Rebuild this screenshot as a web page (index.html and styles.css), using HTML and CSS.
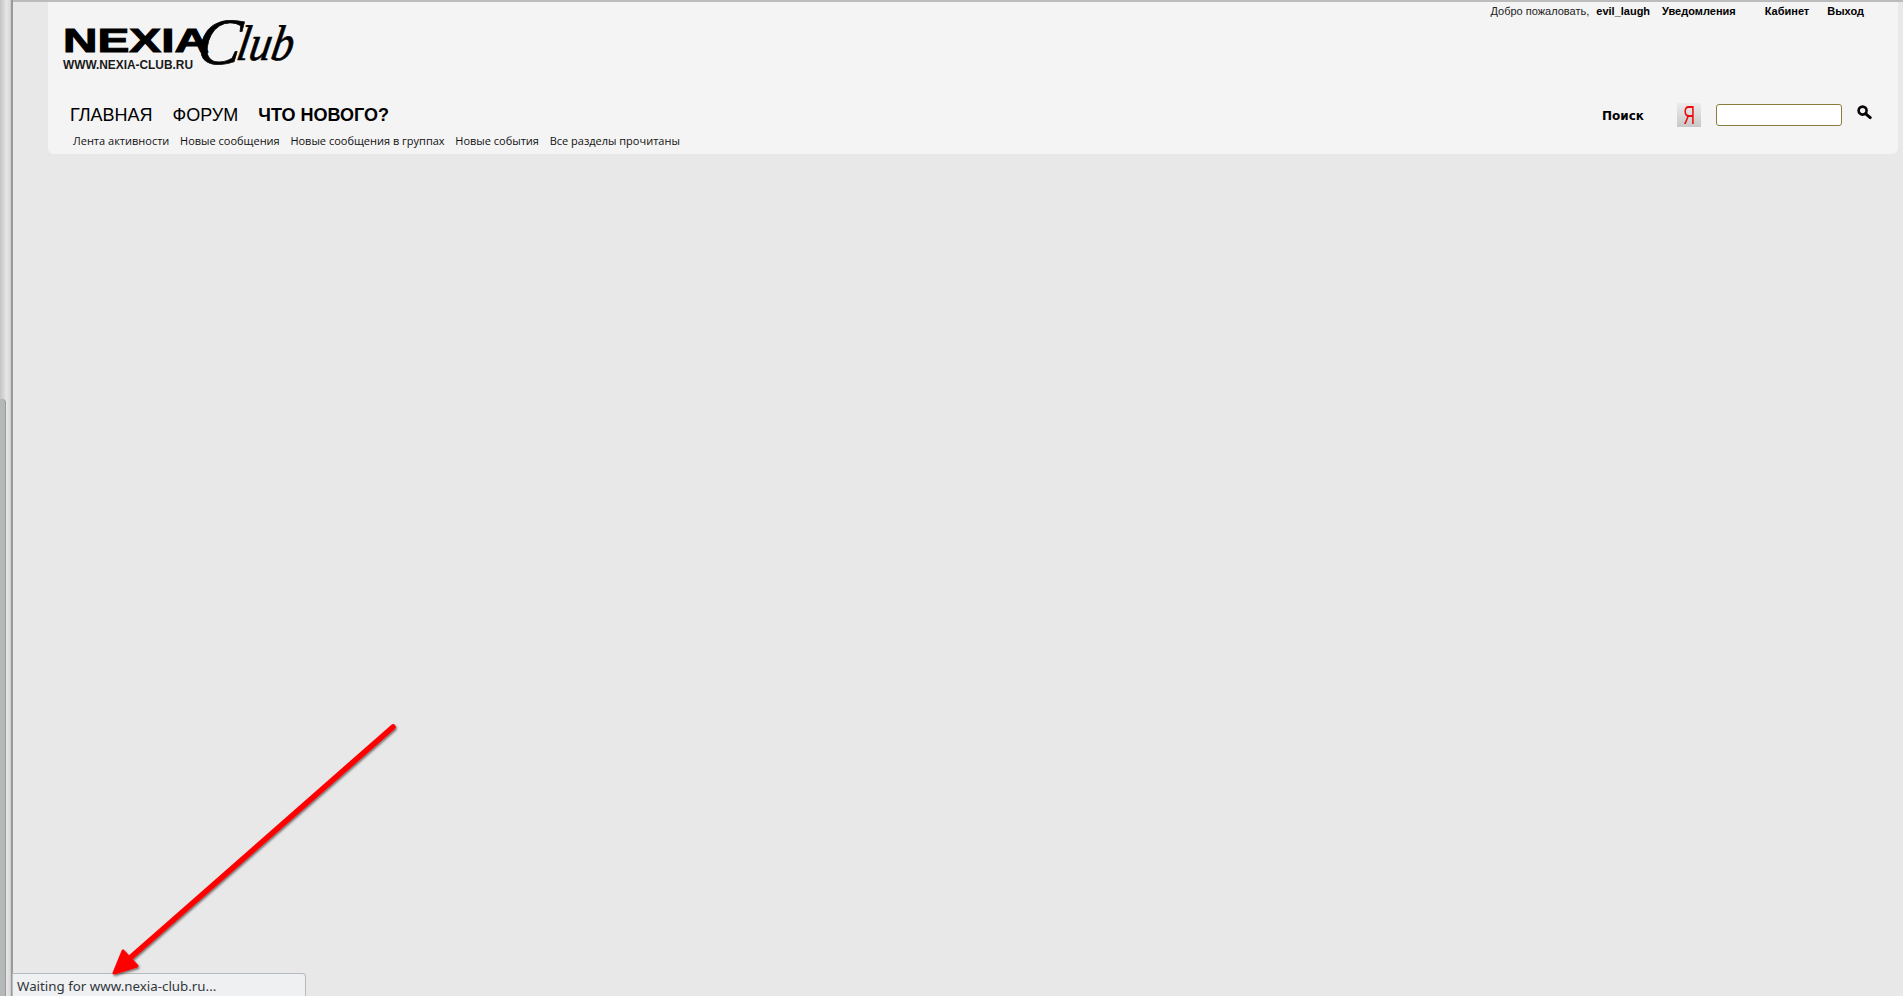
FILE: index.html
```html
<!DOCTYPE html>
<html>
  <head>
    <title>Nexia Club</title>
    <meta charset="utf-8" />
    <link rel="stylesheet" href="styles.css">
  </head>
  <body>
    <div class="side_strip">
      <div class="side_scroll"></div>
    </div>
    <div class="page">
      <div class="header">
        <div class="top_row">
          <div class="logo_area">
            <svg class="logo" width="200" height="54" viewBox="0 0 200 54">
              <text class="logo_nexia" x="0" y="30" textLength="146" lengthAdjust="spacingAndGlyphs">NEXIA</text>
              <text class="logo_url" x="0" y="47" textLength="130" lengthAdjust="spacingAndGlyphs">WWW.NEXIA-CLUB.RU</text>
              <text class="logo_c" x="132" y="42" transform="skewX(-6) translate(5 0)">C</text>
              <text class="logo_lub" x="176" y="38" textLength="56" lengthAdjust="spacingAndGlyphs" transform="skewX(-10) translate(3 0)">lub</text>
            </svg>
          </div>
          <div class="user_links">
            <span class="welcome">Добро пожаловать,</span>
            <a class="user_name">evil_laugh</a>
            <a class="user_link notify">Уведомления</a>
            <a class="user_link cabinet">Кабинет</a>
            <a class="user_link">Выход</a>
          </div>
        </div>
        <div class="nav_row">
          <div class="tabs">
            <a class="tab">ГЛАВНАЯ</a>
            <a class="tab">ФОРУМ</a>
            <a class="tab tab_active">ЧТО НОВОГО?</a>
          </div>
          <div class="search">
            <span class="search_label">Поиск</span>
            <div class="yandex"><span>Я</span></div>
            <input class="search_input" type="text">
            <svg class="search_icon" width="15" height="15" viewBox="0 0 15 15">
              <circle cx="5.6" cy="5.6" r="4" fill="none" stroke="#0a0505" stroke-width="2.6"/>
              <line x1="8.8" y1="8.8" x2="13.2" y2="12.6" stroke="#0a0505" stroke-width="3" stroke-linecap="round"/>
            </svg>
          </div>
        </div>
        <div class="sub_nav">
          <a>Лента активности</a>
          <a>Новые сообщения</a>
          <a>Новые сообщения в группах</a>
          <a>Новые события</a>
          <a>Все разделы прочитаны</a>
        </div>
      </div>
    </div>
    <div class="status_bubble">Waiting for www.nexia-club.ru...</div>
    <svg class="arrow" width="1903" height="996" viewBox="0 0 1903 996">
      <defs>
        <filter id="arrow_shadow" x="-10%" y="-10%" width="120%" height="120%">
          <feDropShadow dx="1" dy="1.5" stdDeviation="1.2" flood-color="#000" flood-opacity="0.55"/>
        </filter>
      </defs>
      <g filter="url(#arrow_shadow)">
        <line x1="393" y1="727" x2="130" y2="958" stroke="#ff0000" stroke-width="5.5" stroke-linecap="round"/>
        <polygon points="114,973 123,951 137,966" fill="#ff0000" stroke="#ff0000" stroke-width="3" stroke-linejoin="round"/>
      </g>
    </svg>
  </body>
</html>
```
FILE: styles.css
```css
body {
  margin: 0;
  padding: 0;
  height: 996px;
  overflow: hidden;
  display: flex;
  background-color: #e8e8e8;
  font-family: "Liberation Sans", Arial, sans-serif;
  color: #000;
}
a {
  color: inherit;
}

.side_strip {
  width: 13px;
  flex-shrink: 0;
  position: relative;
  background: linear-gradient(to right, #c4c4c4, #e6e6e6 50%, #d8d8d8 80%, #9a9a9a 85%, #9a9a9a);
}
.side_scroll {
  width: 5px;
  margin-top: 399px;
  height: 597px;
  background-color: #b4b8b8;
  border-top-right-radius: 4px;
  border-right: 1px solid #999;
}

.page {
  flex: 1;
  padding-left: 35px;
  padding-right: 5px;
  border-top: 2px solid #bcbcbc;
  min-width: 0;
}

.header {
  height: 152px;
  background-color: #f4f4f4;
  border-radius: 0 0 6px 6px;
  display: flex;
  flex-direction: column;
}

.top_row {
  display: flex;
  justify-content: space-between;
  height: 98px;
}
.logo_area {
  padding: 20px 0 0 15px;
}
.logo {
  display: block;
  overflow: visible;
}
.logo_nexia {
  font-size: 33px;
  font-weight: bold;
  stroke: #000;
  stroke-width: 1px;
}
.logo_url {
  font-size: 12px;
  font-weight: bold;
  fill: #1a1a1a;
}
.logo_c,
.logo_lub {
  font-family: "Liberation Serif", serif;
  font-style: italic;
  stroke: #000;
  stroke-width: 0.7px;
}
.logo_c {
  font-size: 66px;
}
.logo_lub {
  font-size: 50px;
}

.user_links {
  display: flex;
  align-items: baseline;
  padding: 3px 34px 0 0;
  font-size: 11px;
}
.welcome {
  color: #222;
  margin-right: 7px;
}
.user_name {
  font-weight: bold;
  margin-right: 12px;
}
.user_link {
  font-weight: bold;
}
.notify {
  margin-right: 29px;
}
.cabinet {
  margin-right: 18px;
}

.nav_row {
  display: flex;
  justify-content: space-between;
  align-items: center;
  height: 30px;
}
.tabs {
  display: flex;
  gap: 20px;
  padding-left: 22px;
  font-size: 18px;
}
.tab_active {
  font-weight: bold;
}

.search {
  display: flex;
  align-items: center;
  padding-right: 26px;
  padding-top: 2px;
}
.search_label {
  font-family: "DejaVu Sans", sans-serif;
  font-size: 12px;
  font-weight: bold;
  margin-right: 33px;
}
.yandex {
  width: 24px;
  height: 24px;
  margin-bottom: 2px;
  background: linear-gradient(to bottom, #ececec, #c8c8c8);
  color: #ee0a0a;
  font-size: 25px;
  line-height: 24px;
  text-align: center;
  margin-right: 15px;
}
.yandex span {
  display: inline-block;
  transform: scaleX(0.65);
}
.search_input {
  box-sizing: border-box;
  width: 126px;
  height: 22px;
  padding: 0;
  margin-bottom: 2px;
  background-color: #fff;
  border: 1px solid #8a7d3c;
  border-radius: 3px;
  margin-right: 15px;
}
.search_icon {
  margin-bottom: 7px;
}

.sub_nav {
  display: flex;
  gap: 10.7px;
  padding: 3px 0 0 25px;
  font-family: "Open Sans", sans-serif;
  font-size: 11px;
  color: #111;
}

.status_bubble {
  position: absolute;
  left: 12px;
  bottom: 0;
  box-sizing: border-box;
  width: 294px;
  height: 23px;
  padding: 3px 0 0 4px;
  background-color: #eff0f2;
  border: 1px solid #b8bbbe;
  border-bottom: 0;
  border-radius: 0 4px 0 0;
  font-family: "Noto Sans", sans-serif;
  font-size: 13.33px;
  color: #31363b;
}

.arrow {
  position: absolute;
  top: 0;
  left: 0;
}
```
